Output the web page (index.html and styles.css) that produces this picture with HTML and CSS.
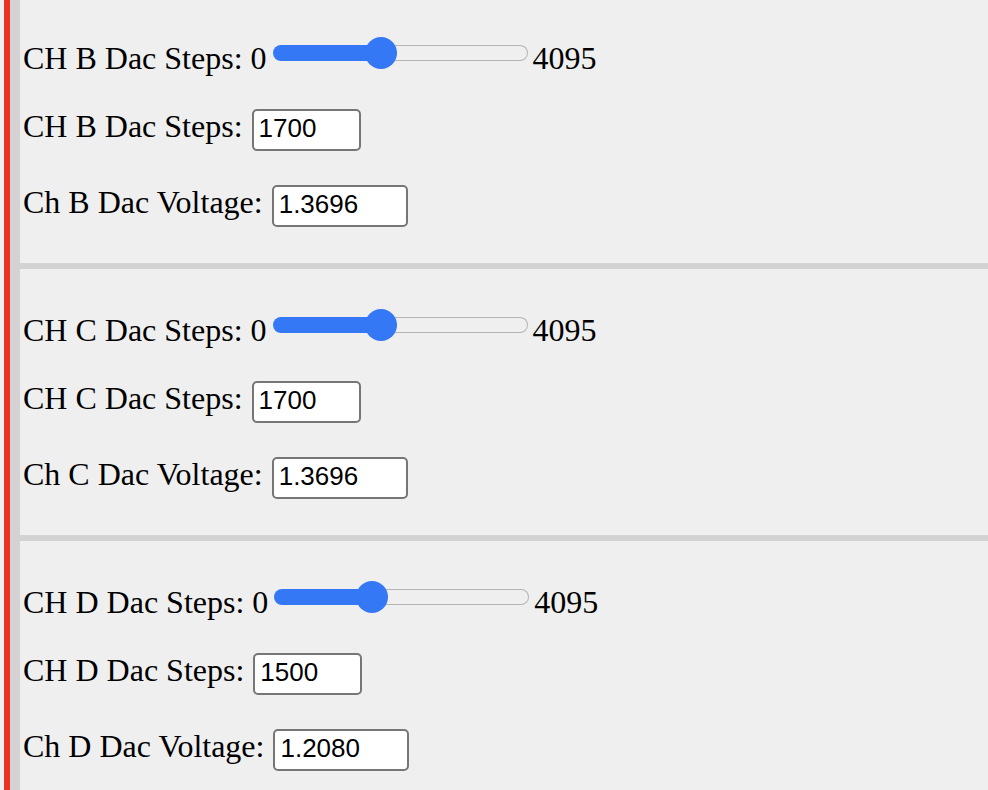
FILE: index.html
```html
<!DOCTYPE html>
<html lang="en">
<head>
<meta charset="utf-8">
<title>DAC Channels</title>
<link rel="stylesheet" href="styles.css">
</head>
<body>
<div class="page">
  <div class="panel">
    <section class="channel first">
      <div class="row slider-row">
        <span class="label">CH B Dac Steps: 0</span>
        <input type="range" class="dac-range" min="0" max="4095" value="1700" style="--p:0.41514">
        <span class="label">4095</span>
      </div>
      <div class="row">
        <label class="label">CH B Dac Steps:</label>
        <input type="text" class="num steps" value="1700">
      </div>
      <div class="row">
        <label class="label">Ch B Dac Voltage:</label>
        <input type="text" class="num volt" value="1.3696">
      </div>
    </section>
    <section class="channel">
      <div class="row slider-row">
        <span class="label">CH C Dac Steps: 0</span>
        <input type="range" class="dac-range" min="0" max="4095" value="1700" style="--p:0.41514">
        <span class="label">4095</span>
      </div>
      <div class="row">
        <label class="label">CH C Dac Steps:</label>
        <input type="text" class="num steps" value="1700">
      </div>
      <div class="row">
        <label class="label">Ch C Dac Voltage:</label>
        <input type="text" class="num volt" value="1.3696">
      </div>
    </section>
    <section class="channel">
      <div class="row slider-row">
        <span class="label">CH D Dac Steps: 0</span>
        <input type="range" class="dac-range" min="0" max="4095" value="1500" style="--p:0.36630">
        <span class="label">4095</span>
      </div>
      <div class="row">
        <label class="label">CH D Dac Steps:</label>
        <input type="text" class="num steps" value="1500">
      </div>
      <div class="row">
        <label class="label">Ch D Dac Voltage:</label>
        <input type="text" class="num volt" value="1.2080">
      </div>
    </section>
  </div>
</div>
</body>
</html>
```

FILE: styles.css
```css
html, body {
  margin: 0;
  padding: 0;
  background: #efefef;
  overflow: hidden;
}

.page {
  margin-left: 4px;
  border-left: 6px solid #eb3324;
}

.panel {
  border-left: 10px solid #d3d3d3;
}

.channel {
  display: flex;
  flex-direction: column;
  gap: 34px;
  padding: 40px 0 36px 3px;
  border-top: 6px solid #d3d3d3;
}

.channel.first {
  padding-top: 37px;
  border-top: none;
}

.row {
  display: flex;
  align-items: baseline;
  font-family: "Liberation Serif", "Times New Roman", serif;
  font-size: 32px;
  line-height: 32px;
  color: #000;
}

.slider-row {
  height: 38px;
}

.label {
  white-space: pre;
}

.dac-range {
  -webkit-appearance: none;
  appearance: none;
  width: 255px;
  height: 32px;
  margin: 0 5px 0 6px;
  padding: 0;
  background: transparent;
  --fill: calc(16px + var(--p) * (100% - 32px));
}

.dac-range::-webkit-slider-runnable-track {
  box-sizing: border-box;
  height: 16px;
  border: 1px solid transparent;
  border-radius: 8px;
  background:
    linear-gradient(to right, #3478f6 var(--fill), transparent var(--fill)) border-box,
    linear-gradient(#efefef, #efefef) padding-box,
    linear-gradient(#b4b4b4, #b4b4b4) border-box;
}

.dac-range::-webkit-slider-thumb {
  -webkit-appearance: none;
  appearance: none;
  width: 32px;
  height: 32px;
  margin-top: -9px;
  border: none;
  border-radius: 50%;
  background: #3478f6;
}

.num {
  box-sizing: border-box;
  height: 42px;
  margin: 0 0 0 9px;
  padding: 1px 5px 5px;
  border: 2px solid #767676;
  border-radius: 5px;
  background: #fff;
  color: #000;
  font-family: "Liberation Sans", Arial, sans-serif;
  font-size: 26px;
  line-height: 32px;
}

.steps {
  width: 109px;
}

.volt {
  width: 136px;
}
```
